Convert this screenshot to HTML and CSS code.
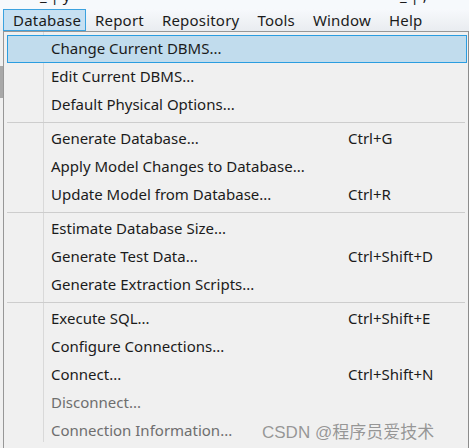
FILE: index.html
```html
<!DOCTYPE html>
<html>
<head>
<meta charset="utf-8">
<link rel="stylesheet" href="styles.css">
</head>
<body>
<div class="titlebar"><span class="t1">_ | y</span><span class="t2">_ | ,</span></div>
<div class="menubar">
  <span class="mb active">Database</span>
  <span class="mb">Report</span>
  <span class="mb">Repository</span>
  <span class="mb">Tools</span>
  <span class="mb">Window</span>
  <span class="mb">Help</span>
</div>
<div class="side"></div>
<div class="menu">
  <div class="item hl"><span>Change Current DBMS...</span><span></span></div>
  <div class="item"><span>Edit Current DBMS...</span><span></span></div>
  <div class="item"><span>Default Physical Options...</span><span></span></div>
  <div class="sep"></div>
  <div class="item"><span>Generate Database...</span><span>Ctrl+G</span></div>
  <div class="item"><span>Apply Model Changes to Database...</span><span></span></div>
  <div class="item"><span>Update Model from Database...</span><span>Ctrl+R</span></div>
  <div class="sep"></div>
  <div class="item"><span>Estimate Database Size...</span><span></span></div>
  <div class="item"><span>Generate Test Data...</span><span>Ctrl+Shift+D</span></div>
  <div class="item"><span>Generate Extraction Scripts...</span><span></span></div>
  <div class="sep"></div>
  <div class="item"><span>Execute SQL...</span><span>Ctrl+Shift+E</span></div>
  <div class="item"><span>Configure Connections...</span><span></span></div>
  <div class="item"><span>Connect...</span><span>Ctrl+Shift+N</span></div>
  <div class="item dis"><span>Disconnect...</span><span></span></div>
  <div class="item dis"><span>Connection Information...</span><span></span></div>
</div>
<div class="watermark">CSDN @程序员爱技术</div>
</body>
</html>
```
FILE: styles.css
```css
html, body {
  margin: 0;
  padding: 0;
}
body {
  width: 469px;
  height: 448px;
  overflow: hidden;
  background: #f0f0f0;
  font-family: "Noto Sans", "Noto Sans CJK SC", sans-serif;
  font-size: 15px;
  color: #1b1b1b;
  position: relative;
}
.titlebar {
  height: 9px;
  background: #f6f9fc;
  overflow: hidden;
  position: relative;
  font-size: 15px;
  line-height: 15px;
}
.titlebar .t1 {
  position: absolute;
  left: 40px;
  top: -12px;
}
.titlebar .t2 {
  position: absolute;
  left: 400px;
  top: -12px;
}
.menubar {
  height: 22px;
  display: flex;
  align-items: stretch;
  padding-left: 3px;
  background: linear-gradient(#f7f9fc, #e9ecf0);
  box-sizing: border-box;
  letter-spacing: 0.2px;
}
.mb {
  display: flex;
  align-items: center;
  padding: 0 8px;
  border: 1px solid transparent;
  line-height: 1;
}
.mb.active {
  background: #c7e0f2;
  border-color: #3ca2df;
  padding: 0 0 0 9px;
  width: 72px;
  box-sizing: content-box;
}
.side {
  position: absolute;
  left: 0;
  top: 66px;
  width: 3px;
  height: 32px;
  background: #a8a8a8;
}
.menu {
  margin-left: 3px;
  width: 466px;
  box-sizing: border-box;
  border: 1px solid #979797;
  border-right: 1px solid #8c8c8c;
  padding: 3px 1px 0 3px;
  height: 430px;
  background-color: #f0f0f0;
  background-image: linear-gradient(to right, transparent 39px, #d9d9d9 39px, #d9d9d9 40px, transparent 40px);
  background-repeat: no-repeat;
  background-size: 100% 410px;
  background-position: 0 0;
}
.item {
  height: 28px;
  box-sizing: border-box;
  border: 1px solid transparent;
  display: grid;
  grid-template-columns: 297px 1fr;
  align-items: center;
  padding-left: 43px;
  padding-bottom: 2px;
  white-space: nowrap;
}
.item.hl {
  background: #c1dced;
  border-color: #2b9de0;
}
.item.dis {
  color: #6e6e6e;
}
.sep {
  height: 6px;
  display: flex;
  align-items: center;
}
.sep::before {
  content: "";
  display: block;
  width: 458px;
  height: 1px;
  background: #cdcdcd;
}
.watermark {
  position: absolute;
  left: 262px;
  top: 418px;
  font-size: 17px;
  color: rgba(120, 120, 120, 0.75);
  font-family: "Liberation Sans", "Noto Sans CJK SC", sans-serif;
  letter-spacing: 0;
}
```
